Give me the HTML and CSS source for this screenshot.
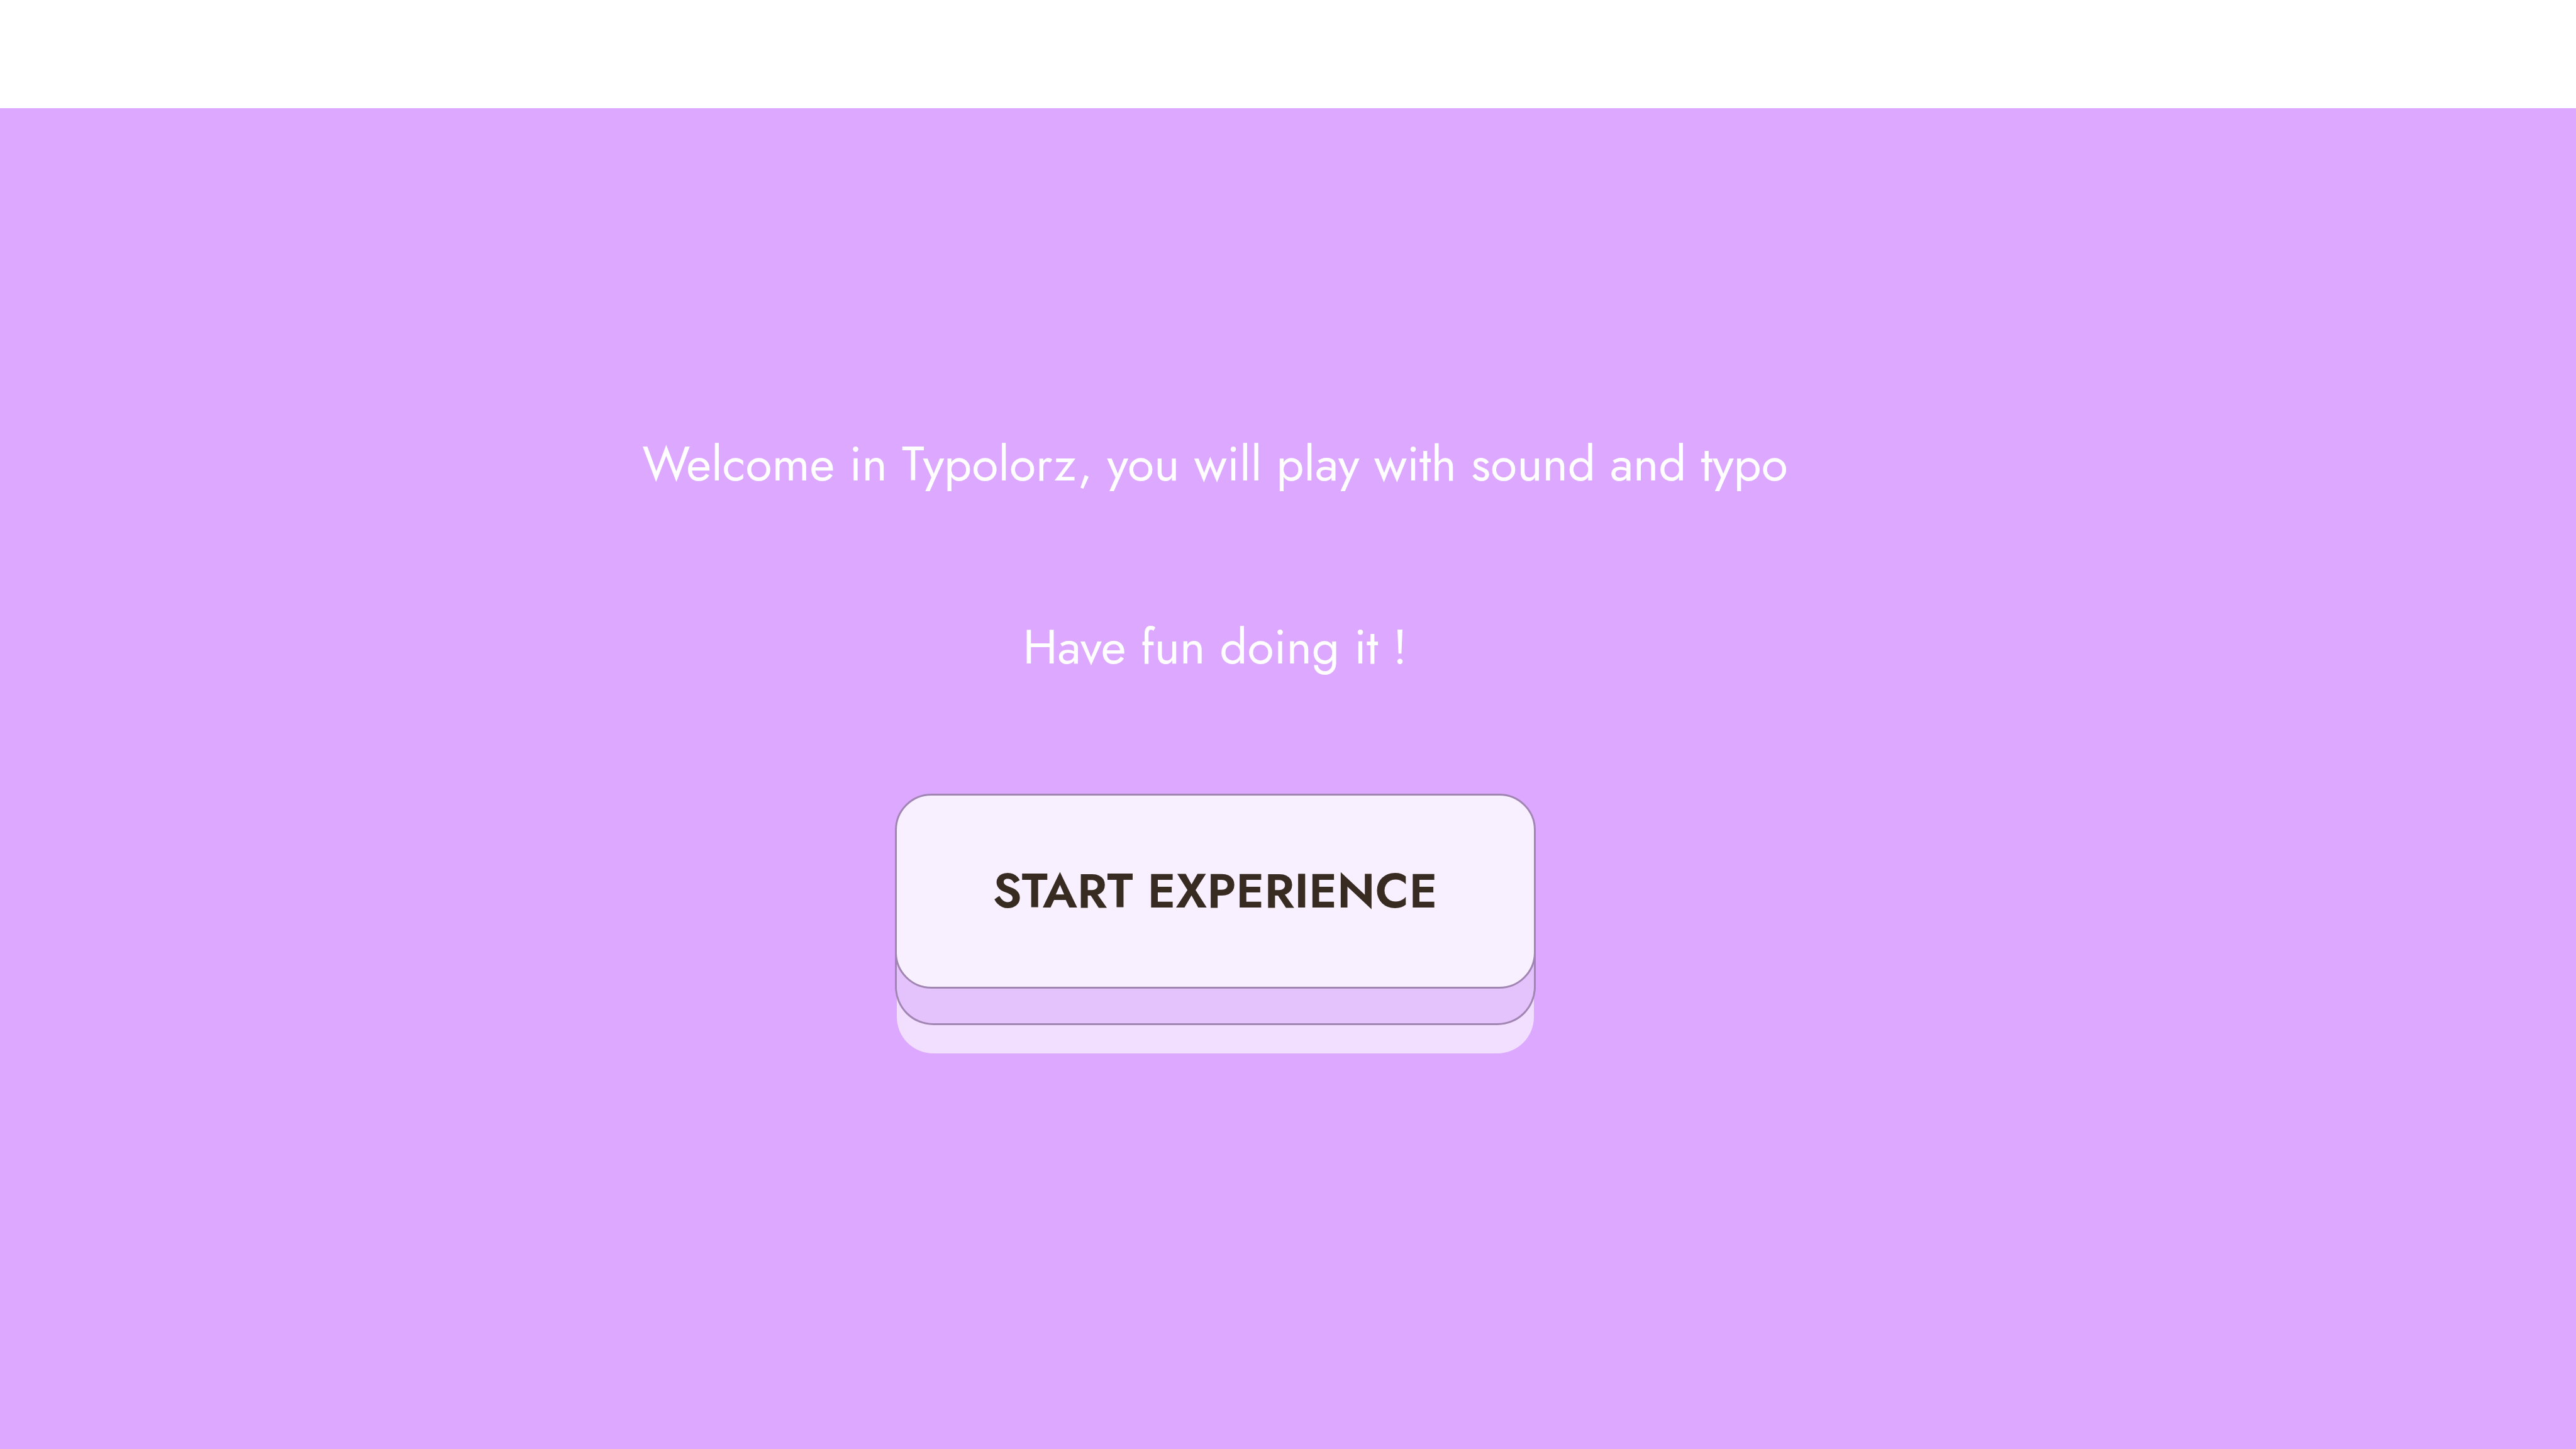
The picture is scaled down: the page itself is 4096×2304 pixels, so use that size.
FILE: index.html
```html
<!DOCTYPE html>
<html lang="en">
<head>
<meta charset="utf-8">
<title>Typolorz</title>
<link rel="stylesheet" href="styles.css">
</head>
<body>
<header class="topbar"></header>
<main class="intro">
<p class="intro-text">Welcome in Typolorz, you will play with sound and typo</p>
<p class="intro-text">Have fun doing it !</p>
<button class="start-button" type="button">START EXPERIENCE</button>
</main>
</body>
</html>
```

FILE: styles.css
```css
* {
  box-sizing: border-box;
}

body {
  margin: 0;
  min-height: 100vh;
  display: flex;
  flex-direction: column;
  background: #dda8ff;
  font-family: Jost, Lato, sans-serif;
}

.topbar {
  height: 172px;
  background: #ffffff;
}

.intro {
  flex: 1;
  display: flex;
  flex-direction: column;
  align-items: center;
  padding: 496px 232px 0 0;
}

.intro-text {
  margin: 0 0 152px;
  font-size: 77px;
  line-height: 139px;
  color: #ffffff;
  text-align: center;
}

.start-button {
  position: relative;
  min-width: 1019px;
  margin-top: 12px;
  padding: 106px 148px;
  border: 3px solid #a186b3;
  border-radius: 58px;
  background: #f8f0ff;
  color: #382b22;
  font-family: inherit;
  font-size: 77px;
  font-weight: 600;
  line-height: 92px;
  white-space: nowrap;
  transform-style: preserve-3d;
  cursor: pointer;
}

/* Lower layers of the raised button */
.start-button::before {
  content: "";
  position: absolute;
  inset: 0;
  border-radius: inherit;
  background: #e4c2fb;
  box-shadow: 0 0 0 3px #a186b3, 0 48px 0 0 #f2dfff;
  transform: translate3d(0, 58px, -1px);
}
```
